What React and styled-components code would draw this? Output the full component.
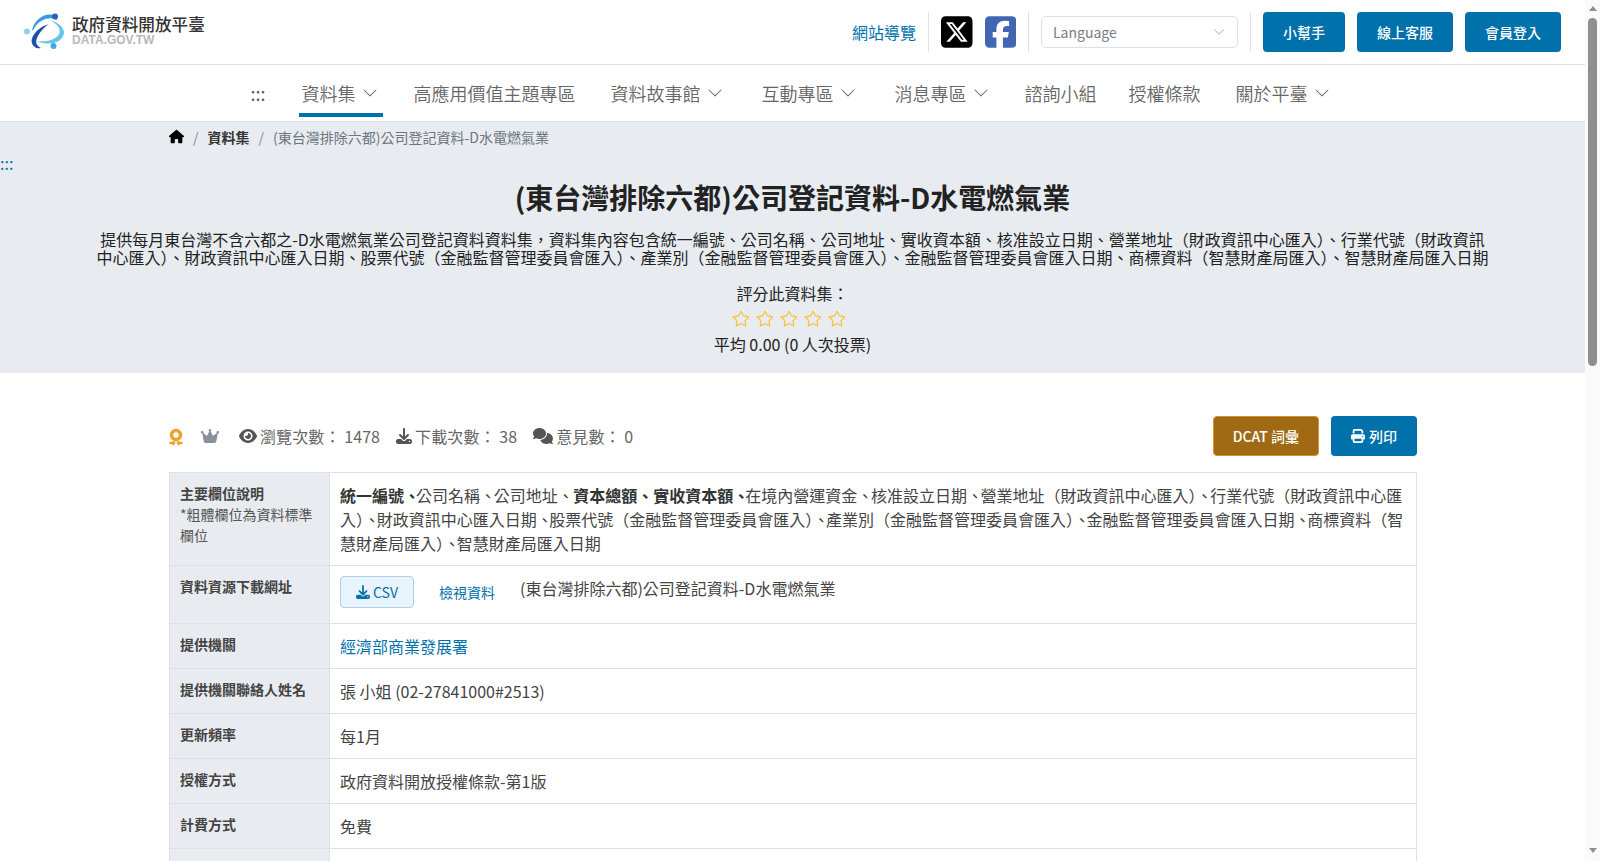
import React from 'react';
import styled, { createGlobalStyle } from 'styled-components';
import { FaHouse, FaEye, FaDownload, FaComments, FaPrint, FaCrown, FaSquareXTwitter, FaSquareFacebook } from 'react-icons/fa6';
import { BsChevronDown } from 'react-icons/bs';
import { Star } from 'lucide-react';

const Global = createGlobalStyle`
  body { margin: 0; background: #fff; color: #444; font-family: "Noto Sans CJK TC", "Noto Sans", sans-serif; font-size: 16px; }
  * { box-sizing: border-box; }
`;

const Page = styled.div`min-height: 2050px; margin-right: 15px;`;

const Scrollbar = styled.aside`
  position: fixed; top: 0; right: 0; bottom: 0; width: 15px; background: #fafafa;
  display: flex; flex-direction: column; align-items: center; padding: 6px 0;
`;
const ArrowUp = styled.span`width: 0; height: 0; border: 4.5px solid transparent; border-top: 0; border-bottom: 5px solid #8f8f8f;`;
const ArrowDown = styled.span`width: 0; height: 0; border: 4.5px solid transparent; border-bottom: 0; border-top: 5px solid #8f8f8f; margin-top: auto; margin-bottom: 2px;`;
const Thumb = styled.span`width: 9px; height: 348px; margin-top: 7px; background: #8f8f8f; border-radius: 5px;`;

const TopBar = styled.header`
  display: flex; align-items: center; height: 65px; padding: 0 24px;
  border-bottom: 1px solid #dde0e8;
`;
const Brand = styled.a`display: flex; align-items: center; gap: 6px; margin-right: auto;`;
const BrandText = styled.div`display: flex; flex-direction: column;`;
const BrandName = styled.span`font-size: 16.6px; line-height: 20px; font-weight: 500; color: #333;`;
const BrandDomain = styled.span`font: bold 12px/14px "Liberation Sans", sans-serif; color: #b8b8b8; margin: -1px 0 4px;`;
const TopLink = styled.a`color: #0071ab; font-size: 16px; margin-right: 12px;`;
const Sep = styled.span`width: 1px; height: 40px; background: #dde0e8; margin-right: ${p => p.$m ?? 12}px;`;
const Social = styled.a`
  display: flex; align-items: center; margin-right: 12px; color: ${p => p.$c};
  & svg { width: 31.5px; height: 36px; }
`;
const LangBox = styled.div`
  display: flex; align-items: center; justify-content: space-between; width: 197px; height: 32px; padding: 0 12px 0 11px;
  border: 1px solid #dde0e8; border-radius: 5px; color: #777c88; font-size: 14px; margin-right: 12px;
`;
const PrimaryBtn = styled.a`
  display: flex; align-items: center; justify-content: center; height: 40px; padding: 0 20px; margin-left: 12px;
  background: #0071ab; color: #fff; border-radius: 4px; font-size: 14px; font-weight: 500; gap: 4px;
`;
const Nav = styled.nav`
  display: flex; justify-content: center; align-items: stretch; height: 57px; gap: 28px;
  border-bottom: 1px solid #dde0e8; color: #666;
`;
const NavDots = styled.span`display: flex; align-items: center; font-size: 18px; padding-right: 5px; color: #555;`;
const NavItem = styled.a`
  display: flex; align-items: center; gap: 6px; padding: 0 5px 0 3px; height: 52px; font-size: 18px;
  margin-left: ${p => p.$shift || 0}px;
  color: #666; font-weight: 350; border-bottom: 4px solid ${p => p.$active ? '#0071ab' : 'transparent'};
  & > span { position: relative; top: 4px; }
  & > svg { position: relative; top: 4px; }
`;
const Hero = styled.section`background: #e8ebf0; height: 251px; padding-top: 6px; text-align: center;`;
const Crumbs = styled.div`display: flex; align-items: center; gap: 8px; padding-left: 169px; height: 17px; font-size: 14px; color: #6c757d; text-align: left;`;
const CrumbStrong = styled.a`font-weight: 700; color: #333;`;
const CrumbSlash = styled.span`color: #8a8f98; margin: 0 1px;`;
const HeroDots = styled.a`display: block; text-align: left; color: #0071ab; font-size: 16px; line-height: 14px; margin-top: 11px;`;
const Title = styled.h1`margin: 7px 0 0; font-size: 28px; line-height: 40px; font-weight: 700; color: #222;`;
const Desc = styled.p`margin: 13px auto 0; width: 1400px; font-size: 16px; line-height: 18px; color: #222;`;
const RateLabel = styled.div`margin-top: 16px; font-size: 16px; line-height: 22px; color: #222;`;
const Stars = styled.div`display: flex; justify-content: center; gap: 6px; margin-top: 6px; padding-right: 7px; color: #fbbd30;`;
const Avg = styled.div`margin-top: 5px; font-size: 16px; line-height: 22px; color: #222;`;

const Main = styled.main`padding: 43px 168px 0 169px;`;
const StatBar = styled.div`display: flex; align-items: center; height: 40px; color: #666;`;
const Stat = styled.span`display: flex; align-items: center; gap: 3px; margin-right: 16px; font-size: 16px; letter-spacing: .1px;`;
const IconSlot = styled.span`display: flex; color: ${p => p.$c || '#555'}; margin-right: ${p => p.$m || 0}px;`;
const Actions = styled.div`display: flex; gap: 12px; margin-left: auto;`;
const DcatBtn = styled(PrimaryBtn)`margin: 0; padding: 0 19px; background: #a06a14; border: 1px solid #d89030;`;
const PrintBtn = styled(PrimaryBtn)`margin: 0;`;
const Table = styled.table`width: 100%; margin-top: 16px; border-collapse: collapse; table-layout: fixed;`;
const ColLabel = styled.col`width: 160px;`;
const Label = styled.th`
  padding: 10px; text-align: left; vertical-align: top; background: #e8ebf0; border: 1px solid #dde0e6;
  font-size: 14px; line-height: 21px; font-weight: 700; color: #444;
`;
const LabelNote = styled.span`display: block; font-weight: 400; color: #555;`;
const Value = styled.td`padding: 10px; vertical-align: top; border: 1px solid #dde0e6; font-size: 16px; line-height: 24px; color: #444;`;
const Field = styled.span`font-weight: ${p => p.$bold ? 700 : 400}; color: ${p => p.$bold ? '#333' : 'inherit'};`;
const FieldMark = styled.span`letter-spacing: ${p => p.$trim}px;`;
const Link = styled.a`color: #0071ab;`;
const Res = styled.div`display: flex; align-items: flex-start; gap: 25px; min-height: 37px;`;
const CsvBtn = styled.a`
  display: flex; align-items: center; gap: 3px; height: 32px; width: 74px; justify-content: center;
  background: #e9f3fb; border: 1px solid #a9d2ee; border-radius: 4px; color: #0071ab; font-size: 14px;
`;
const ViewLink = styled.a`color: #0071ab; font-size: 14px; line-height: 32px;`;
const ResName = styled.span`line-height: 24px;`;

const Logo = () => (
  <svg width="42" height="38" viewBox="0 0 42 38">
    <path d="M13 28 C26 34 39 29 40 20 C40.500 14 33 9 26 7 C33 11 36.500 15 35.500 20 C33.500 26 24 29.500 13 28Z" fill="#66c6ea" />
    <path d="M8 18 C9 8 20 -1 30 2 C32 3 33 5 33 7 C27 3 16 6 11 14 C10 16 9 17 8 18Z" fill="#3a9be0" />
    <path d="M25 11 C14 14 6 24 8 30 C9 34 13 36 17 35 C13 33 11 30 13 25 C15 20 20 14 25 11Z" fill="#1c50a8" />
    <circle cx="31" cy="3.500" r="3" fill="#2a5fb5" />
    <circle cx="3" cy="18.500" r="3" fill="#86d4f2" />
    <circle cx="29.500" cy="33" r="3" fill="#3fa9e0" />
  </svg>
);
const Medal = () => (
  <svg width="14" height="20" viewBox="0 0 14 20">
    <circle cx="7" cy="9" r="4.500" fill="none" stroke="#f0a030" strokeWidth="3.400" />
    <path d="M0.500 16 L5.800 15 L6.500 17 L4 20 L3.500 18 L0.500 18.500Z M13.500 16 L8.200 15 L7.500 17 L10 20 L10.500 18 L13.500 18.500Z" fill="#f0a030" />
  </svg>
);

const Cell = ({ label, children }) => (
  <tr><Label>{label}</Label><Value>{children}</Value></tr>
);

const fields = [
  { t: '統一編號', b: 1, trim: -4 },
  { t: '公司名稱', trim: -2.4 },
  { t: '公司地址', trim: -0.5 },
  { t: '資本總額', b: 1, trim: 0 },
  { t: '實收資本額', b: 1, trim: -4 },
  { t: '在境內營運資金', trim: -2.4 },
  { t: '核准設立日期', trim: -2.4 },
  { t: '營業地址（財政資訊中心匯入）', trim: -2.4 },
  { t: '行業代號（財政資訊中心匯入）', trim: -3.4 },
  { t: '財政資訊中心匯入日期', trim: -3.4 },
  { t: '股票代號（金融監督管理委員會匯入）', trim: -3.4 },
  { t: '產業別（金融監督管理委員會匯入）', trim: -3.4 },
  { t: '金融監督管理委員會匯入日期', trim: -3.4 },
  { t: '商標資料（智慧財產局匯入）', trim: -3.4 },
  { t: '智慧財產局匯入日期' },
];

export default function App() {
  const nav = [
    { t: '資料集', c: 1, a: 1 },
    { t: '高應用價值主題專區' },
    { t: '資料故事館', c: 1, s: -1 },
    { t: '互動專區', c: 1, s: 3 },
    { t: '消息專區', c: 1, s: 3 },
    { t: '諮詢小組' },
    { t: '授權條款', s: -4 },
    { t: '關於平臺', c: 1, s: -1 },
  ];
  return (
    <Page>
      <Global />
      <Scrollbar><ArrowUp /><Thumb /><ArrowDown /></Scrollbar>
      <TopBar>
        <Brand>
          <Logo />
          <BrandText><BrandName>政府資料開放平臺</BrandName><BrandDomain>DATA.GOV.TW</BrandDomain></BrandText>
        </Brand>
        <TopLink>網站導覽</TopLink>
        <Sep />
        <Social $c="#000"><FaSquareXTwitter /></Social>
        <Social $c="#4267b2"><FaSquareFacebook /></Social>
        <Sep />
        <LangBox>Language<BsChevronDown size={12} color="#aaa" /></LangBox>
        <Sep $m={0} />
        <PrimaryBtn>小幫手</PrimaryBtn>
        <PrimaryBtn>線上客服</PrimaryBtn>
        <PrimaryBtn>會員登入</PrimaryBtn>
      </TopBar>
      <Nav>
        <NavDots>:::</NavDots>
        {nav.map(({ t, c, a, s }) => (
          <NavItem key={t} $active={a} $shift={s}><span>{t}</span>{c && <BsChevronDown size={16} />}</NavItem>
        ))}
      </Nav>
      <Hero>
        <Crumbs>
          <FaHouse size={15} color="#000" />
          <CrumbSlash>/</CrumbSlash>
          <CrumbStrong>資料集</CrumbStrong>
          <CrumbSlash>/</CrumbSlash>
          <span>(東台灣排除六都)公司登記資料-D水電燃氣業</span>
        </Crumbs>
        <HeroDots>:::</HeroDots>
        <Title>(東台灣排除六都)公司登記資料-D水電燃氣業</Title>
        <Desc>提供每月東台灣不含六都之-D水電燃氣業公司登記資料資料集，資料集內容包含統一編號、公司名稱、公司地址、實收資本額、核准設立日期、營業地址（財政資訊中心匯入）、行業代號（財政資訊中心匯入）、財政資訊中心匯入日期、股票代號（金融監督管理委員會匯入）、產業別（金融監督管理委員會匯入）、金融監督管理委員會匯入日期、商標資料（智慧財產局匯入）、智慧財產局匯入日期</Desc>
        <RateLabel>評分此資料集：</RateLabel>
        <Stars>{[0, 1, 2, 3, 4].map(i => <Star key={i} size={18} strokeWidth={1.5} />)}</Stars>
        <Avg>平均 0.00 (0 人次投票)</Avg>
      </Hero>
      <Main>
        <StatBar>
          <IconSlot $m={18}><Medal /></IconSlot>
          <IconSlot $c="#8a8f9c" $m={20}><FaCrown size={18} /></IconSlot>
          <Stat><IconSlot><FaEye size={18} /></IconSlot>瀏覽次數： 1478</Stat>
          <Stat><IconSlot><FaDownload size={16} /></IconSlot>下載次數： 38</Stat>
          <Stat><IconSlot><FaComments size={20} /></IconSlot>意見數： 0</Stat>
          <Actions>
            <DcatBtn>DCAT 詞彙</DcatBtn>
            <PrintBtn><FaPrint size={14} />列印</PrintBtn>
          </Actions>
        </StatBar>
        <Table>
          <colgroup><ColLabel /><col /></colgroup>
          <tbody>
            <Cell label={<>主要欄位說明<LabelNote>*粗體欄位為資料標準欄位</LabelNote></>}>
              {fields.map(({ t, b, trim }) => (
                <Field key={t} $bold={b}>{t}{trim !== undefined && <FieldMark $trim={trim}>、</FieldMark>}</Field>
              ))}
            </Cell>
            <Cell label="資料資源下載網址">
              <Res>
                <CsvBtn><FaDownload size={14} />CSV</CsvBtn>
                <ViewLink>檢視資料</ViewLink>
                <ResName>(東台灣排除六都)公司登記資料-D水電燃氣業</ResName>
              </Res>
            </Cell>
            <Cell label="提供機關"><Link>經濟部商業發展署</Link></Cell>
            <Cell label="提供機關聯絡人姓名">張 小姐 (02-27841000#2513)</Cell>
            <Cell label="更新頻率">每1月</Cell>
            <Cell label="授權方式">政府資料開放授權條款-第1版</Cell>
            <Cell label="計費方式">免費</Cell>
            <Cell label="編碼格式">UTF-8</Cell>
          </tbody>
        </Table>
      </Main>
    </Page>
  );
}
